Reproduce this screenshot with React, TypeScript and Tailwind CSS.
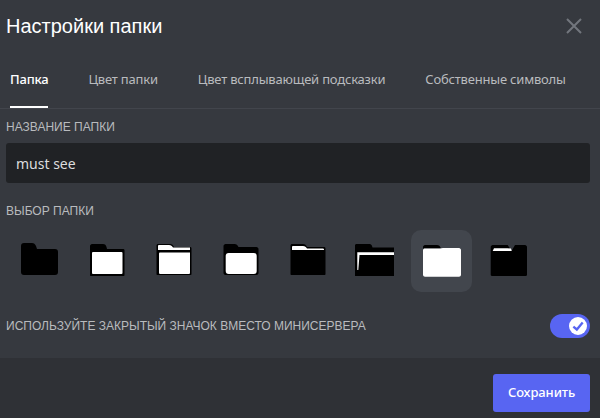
const labelFont = "font-['Liberation_Sans',sans-serif]";

function FolderIcon({ index }: { index: number }) {
  return (
    <svg width="61" height="62" viewBox="0 0 61 62" fill="none">
      {index === 0 && (
        <path d="M15 13h8c2 0 3 1 4 3l1 3h18c2 0 3 1 3 3v20c0 2-1 3-3 3H15c-2 0-3-1-3-3V16c0-2 1-3 3-3z" fill="#000" />
      )}
      {index === 1 && (
        <>
          <path d="M16 14h11c2 0 3 1 3.500 3l.5 2h16c1 0 1.500.5 1.500 1.500V45c0 .6-.4 1-1 1H15c-.6 0-1-.4-1-1V16c0-1 1-2 2-2z" fill="#000" />
          <rect x="16" y="22" width="30.500" height="22" rx="1" fill="#fff" />
        </>
      )}
      {index === 2 && (
        <>
          <path d="M15 14h12c2 0 3 1 4 3h16c1 0 1.500 .5 1.500 1.500V44c0 .6-.4 1-1 1H14.500c-.6 0-1-.4-1-1V15.500c0-.8.7-1.500 1.500-1.500z" fill="#000" />
          <path d="M16 15h10c2 0 3 1 4 2.500h17v2.500H15v-4c0-.5.500-1 1-1z" fill="#fff" />
          <path d="M16 23.500c0-.5.500-1 1-1h30v20c0 1-.5 1.500-1.500 1.500h-28c-1 0-1.500-.5-1.500-1.500z" fill="#fff" />
        </>
      )}
      {index === 3 && (
        <>
          <path d="M15.500 14h9c2 0 3 1 4 3h18c1 0 2 1 2 2v24c0 1-1 2-2 2h-31c-1 0-2-1-2-2V16c0-1 1-2 2-2z" fill="#000" />
          <rect x="15.700" y="23" width="31" height="21" rx="3" fill="#fff" />
        </>
      )}
      {index === 4 && (
        <>
          <path d="M15 14h11c2 0 3 1 4 3h17c1 0 1.500 .5 1.500 1.500V44c0 .6-.4 1-1 1H14.500c-.6 0-1-.4-1-1V15.500c0-.8.7-1.500 1.500-1.500z" fill="#000" />
          <path d="M16 16h10c2 0 3 1 4 2.500h16c1 0 1 1 1 1.500H15v-3c0-.5.500-1 1-1z" fill="#fff" />
        </>
      )}
      {index === 5 && (
        <>
          <path d="M13 14h12c1.500 0 2.500 .5 3 2l.5 1.500H50V46H11V15c0-.5 1-1 2-1z" fill="#000" />
          <path d="M13.300 22.300H50V25H15.500L14.300 40h-1z" fill="#fff" />
        </>
      )}
      {index === 6 && (
        <>
          <path d="M14 15h12c2 0 3 1 4 3.500H12V17c0-1 1-2 2-2z" fill="#000" />
          <path d="M14 18.500h15c1 0 2-.5 3-.5h16c1 0 2 1 2 2v24.700c0 1-1 2-2 2H14c-1 0-2-1-2-2V20c0-.8 1-1.500 2-1.500z" fill="#fff" />
        </>
      )}
      {index === 7 && (
        <>
          <path d="M14.700 15h15l3.800 6L37 15h10c1 0 2 1 2 2v27.700c0 1-1 1.300-2 1.300H14.700c-1 0-2-.3-2-1.300V17c0-1 1-2 2-2z" fill="#000" />
          <path d="M16 18.300h13.500l3.500 .2 .7 2.500H14.700z" fill="#fff" />
        </>
      )}
    </svg>
  );
}

const tabs = ['Цвет папки', 'Цвет всплывающей подсказки', 'Собственные символы'];

export default function App() {
  return (
    <div className="w-[600px] h-[418px] bg-[#36393f] flex flex-col overflow-hidden">
      {/* Header */}
      <div className="h-[52px] pl-[6px] pr-[18px] flex items-center justify-between">
        <h1 className={`${labelFont} text-[20px] text-white`}>Настройки папки</h1>
        <svg className="-mt-px" width="16" height="16" viewBox="0 0 16 16" fill="none" stroke="#72767d" strokeWidth="2">
          <path d="M1 1l14 14M15 1L1 15" />
        </svg>
      </div>

      {/* Tabs */}
      <div className="h-[57px] flex items-stretch gap-[40px] pl-[10px] border-b border-[#42454c] font-['Noto_Sans',sans-serif] text-[13px] tracking-[-0.2px]">
        <div className="flex items-center font-medium text-white border-b-2 border-white pt-[2px]">Папка</div>
        {tabs.map((tab) => (
          <div key={tab} className="flex items-center text-[#b9bbbe]">
            {tab}
          </div>
        ))}
      </div>

      {/* Body */}
      <div className="flex-1 flex flex-col pl-[6px] pr-[10px] pt-[11px]">
        <label className={`${labelFont} text-[12px] leading-[14px] text-[#b9bbbe]`}>НАЗВАНИЕ ПАПКИ</label>
        <div className="mt-[9px] h-[40px] rounded-[3px] bg-[#202225] px-[10px] flex items-center font-['Noto_Sans',sans-serif] text-[14px] text-[#dcddde]">
          must see
        </div>
        <label className={`${labelFont} mt-[21px] text-[12px] leading-[14px] text-[#b9bbbe]`}>ВЫБОР ПАПКИ</label>
        <div className="mt-[12px] pl-[3px] flex gap-[6px]">
          {[0, 1, 2, 3, 4, 5, 6, 7].map((i) => (
            <div key={i} className={`w-[61px] h-[62px] rounded-[10px] ${i === 6 ? 'bg-[#42464d]' : ''}`}>
              <FolderIcon index={i} />
            </div>
          ))}
        </div>
        <div className="mt-[22px] flex items-center justify-between">
          <span className={`${labelFont} text-[12px] text-[#b9bbbe]`}>ИСПОЛЬЗУЙТЕ ЗАКРЫТЫЙ ЗНАЧОК ВМЕСТО МИНИСЕРВЕРА</span>
          <div className="w-[40px] h-[24px] rounded-full bg-[#5865f2] flex items-center justify-end pr-[3px]">
            <div className="w-[18px] h-[18px] rounded-full bg-white flex items-center justify-center">
              <svg width="14" height="14" viewBox="0 0 12 12" fill="none" stroke="#5865f2" strokeWidth="2">
                <path d="M2 6.500l3 2.500 5-6" />
              </svg>
            </div>
          </div>
        </div>
      </div>

      {/* Footer */}
      <div className="h-[60px] bg-[#2f3136] flex items-end justify-end pr-[10px] pb-[6px]">
        <button className="w-[97px] h-[38px] rounded-[3px] bg-[#5865f2] text-white font-['Noto_Sans',sans-serif] text-[13px] font-medium tracking-[-0.1px]">
          Сохранить
        </button>
      </div>
    </div>
  );
}
